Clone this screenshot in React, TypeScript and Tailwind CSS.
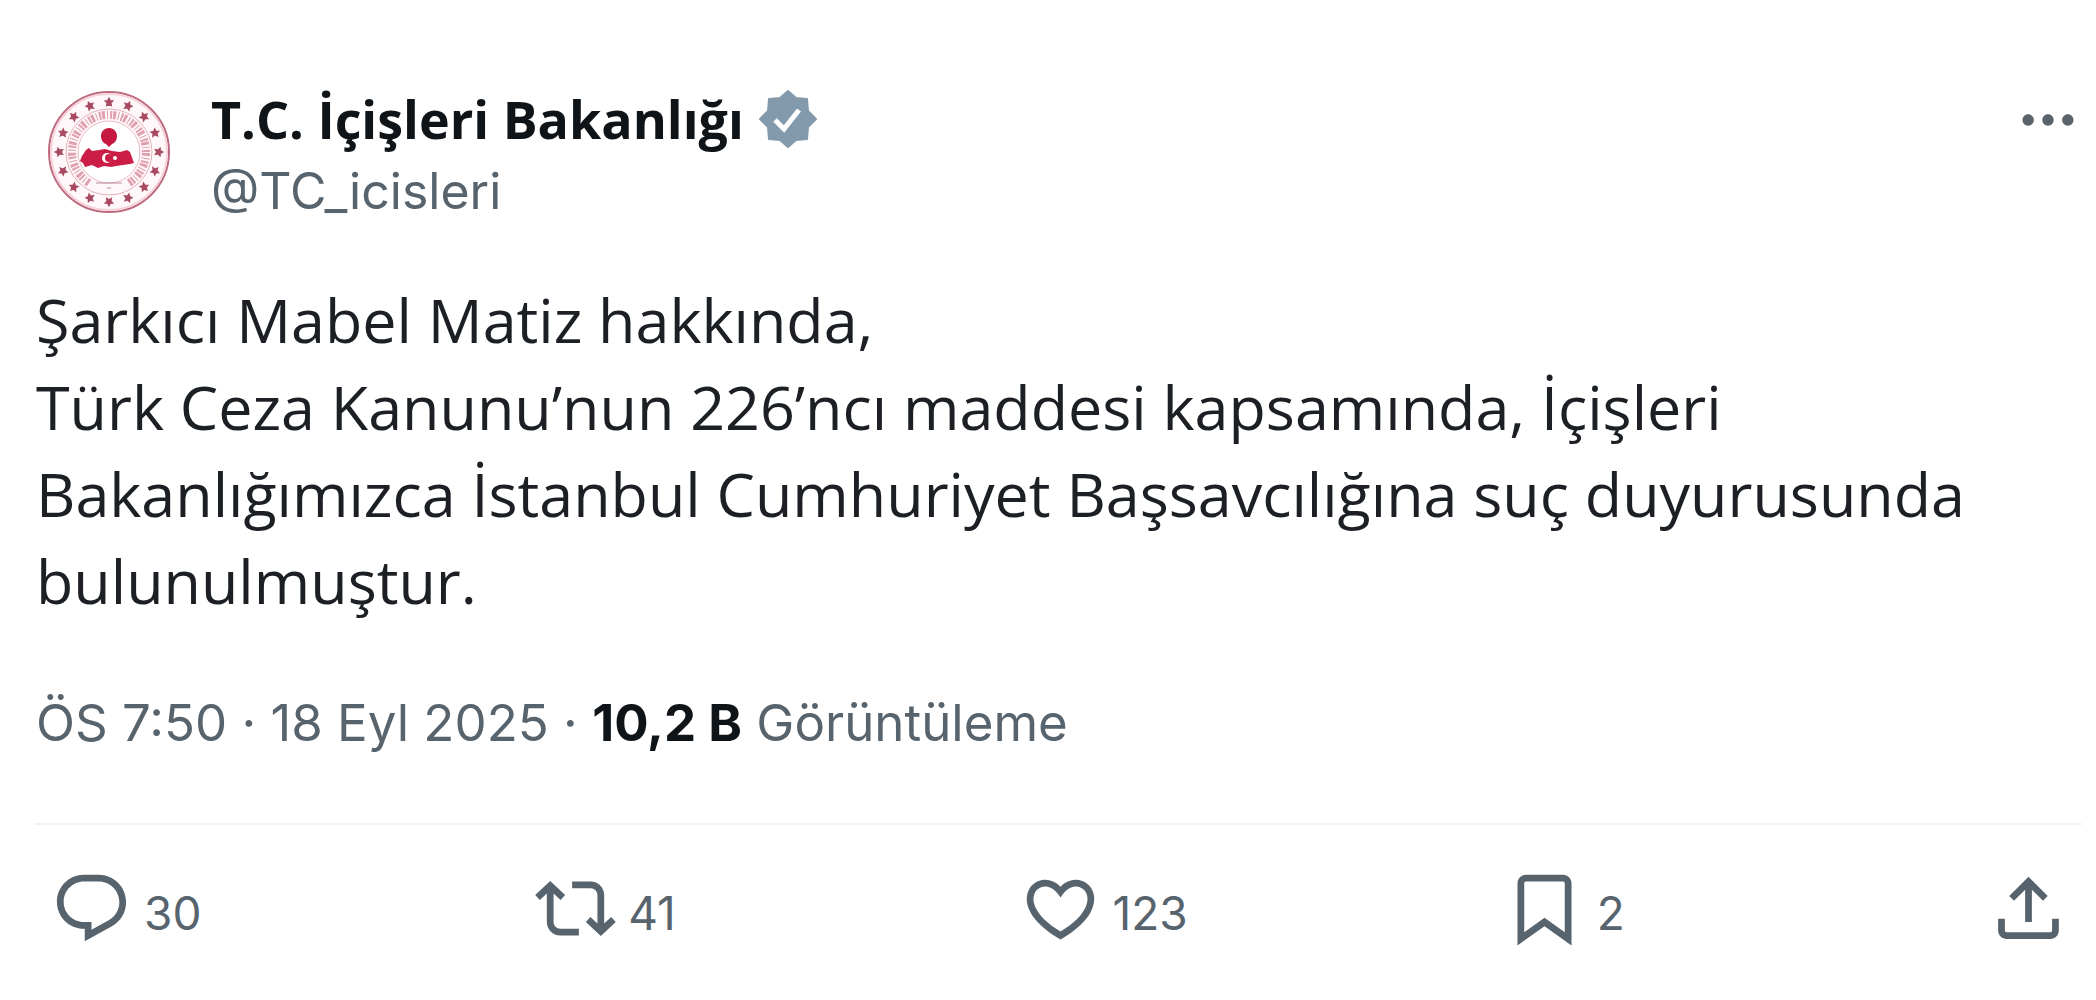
import type { ReactNode } from "react";

const paths = {
  reply:
    "M1.751 10c0-4.42 3.584-8 8.005-8h4.366c4.49 0 8.129 3.64 8.129 8.13 0 2.96-1.607 5.68-4.196 7.11l-8.054 4.46v-3.69h-.067c-4.49.1-8.183-3.51-8.183-8.01zm8.005-6c-3.317 0-6.005 2.69-6.005 6 0 3.37 2.77 6.08 6.138 6.01l.351-.01h1.761v2.3l5.087-2.81c1.951-1.08 3.163-3.13 3.163-5.36 0-3.39-2.744-6.13-6.129-6.13H9.756z",
  repost:
    "M4.5 3.88l4.432 4.14-1.364 1.46L5.5 7.55V16c0 1.1.896 2 2 2H13v2H7.5c-2.209 0-4-1.79-4-4V7.55L1.432 9.48.068 8.02 4.5 3.88zM16.5 6H11V4h5.5c2.209 0 4 1.79 4 4v8.45l2.068-1.93 1.364 1.46-4.432 4.14-4.432-4.14 1.364-1.46 2.068 1.93V8c0-1.1-.896-2-2-2z",
  like: "M16.697 5.5c-1.222-.06-2.679.51-3.89 2.16l-.805 1.09-.806-1.09C9.984 6.01 8.526 5.44 7.304 5.5c-1.243.07-2.349.78-2.91 1.91-.552 1.12-.633 2.78.479 4.82 1.074 1.97 3.257 4.27 7.129 6.61 3.87-2.34 6.052-4.64 7.126-6.61 1.111-2.04 1.03-3.7.477-4.82-.561-1.13-1.666-1.84-2.908-1.91zm4.187 7.69c-1.351 2.48-4.001 5.12-8.379 7.67l-.503.3-.504-.3c-4.379-2.55-7.029-5.19-8.382-7.67-1.36-2.5-1.41-4.86-.514-6.67.887-1.79 2.647-2.91 4.601-3.01 1.651-.09 3.368.56 4.798 2.01 1.429-1.45 3.146-2.1 4.796-2.01 1.954.1 3.714 1.22 4.601 3.01.896 1.81.846 4.17-.514 6.67z",
  bookmark:
    "M4 4.5C4 3.12 5.119 2 6.5 2h11C18.881 2 20 3.12 20 4.5v18.44l-8-5.71-8 5.71V4.5zM6.5 4c-.276 0-.5.22-.5.5v14.56l6-4.29 6 4.29V4.5c0-.28-.224-.5-.5-.5h-11z",
  share:
    "M12 2.59l5.7 5.7-1.41 1.42L13 6.41V16h-2V6.41l-3.3 3.3-1.41-1.42L12 2.59zM21 15l-.02 3.51c0 1.38-1.12 2.49-2.5 2.49H5.5C4.11 21 3 19.88 3 18.5V15h2v3.5c0 .28.22.5.5.5h12.98c.28 0 .5-.22.5-.5L19 15h2z",
  more: "M3 12c0-1.1.9-2 2-2s2 .9 2 2-.9 2-2 2-2-.9-2-2zm9 2c1.1 0 2-.9 2-2s-.9-2-2-2-2 .9-2 2 .9 2 2 2zm7 0c1.1 0 2-.9 2-2s-.9-2-2-2-2 .9-2 2 .9 2 2 2z",
};

const actions = [
  { label: "Yanıtla", icon: paths.reply, count: "30" },
  { label: "Yeniden gönder", icon: paths.repost, count: "41" },
  { label: "Beğen", icon: paths.like, count: "123" },
  { label: "Yer işareti", icon: paths.bookmark, count: "2" },
];

function Icon({ d, className }: { d: string; className: string }) {
  return (
    <svg viewBox="0 0 24 24" fill="currentColor" className={className} aria-hidden="true">
      <path d={d} />
    </svg>
  );
}

function Seal() {
  const stars = Array.from({ length: 16 }, (_, i) => (i * 360) / 16);

  return (
    <svg viewBox="0 0 124 124" className="size-31 shrink-0" role="img" aria-label="T.C. İçişleri Bakanlığı">
      <circle cx="62" cy="62" r="60" fill="#fff8fa" stroke="#bd6a80" strokeWidth="2" />
      <circle cx="62" cy="62" r="58" fill="none" stroke="#f6d3db" strokeWidth="2" />
      {stars.map((angle) => (
        <path
          key={angle}
          transform={`rotate(${angle} 62 62)`}
          d="M62 9l1 2 2 .2-1.500 1.500.4 2.200-1.900-1.100-1.900 1.100.4-2.200-1.500-1.500 2-.2z"
          fill="#a94a63"
          stroke="#a94a63"
          strokeWidth="2"
        />
      ))}
      <circle cx="62" cy="62" r="43" fill="none" stroke="#e3b0bb" />
      {/* lettering band, open at the bottom */}
      <path
        d="M42 93A37 37 0 1 1 82 93"
        fill="none"
        stroke="#dfa0af"
        strokeWidth="8"
        strokeDasharray="3 2 1 2 2 1"
      />
      <circle cx="62" cy="62" r="31" fill="#fff" stroke="#ecb9c4" />
      <path d="M49 93h26M60 98h4" stroke="#b98a96" />
      <path d="M62 38c5 0 8 4 8 8s-2 7-5 8l-3 3-3-3c-3-1-5-4-5-8s3-8 8-8z" fill="#c5193f" />
      <path
        d="M39 60l3-2 3 3 7-1 6-1 7 2 8 1 7-2 3 2 4 11-4 1-7 1-7 1-5 1-7-1-6 2-6-3-7 2-2-4-3-2 2-5z"
        fill="#cb1d45"
      />
      <circle cx="60" cy="68" r="5" fill="#fff" />
      <circle cx="62" cy="68" r="4" fill="#cb1d45" />
      <circle cx="68" cy="68" r="2" fill="#fff" />
    </svg>
  );
}

function VerifiedBadge() {
  return (
    <svg viewBox="0 0 60 60" className="size-15 shrink-0" role="img" aria-label="Onaylanmış hesap">
      <path
        d="M30 2L38 9 49 10 50 22 58 30 50 38 49 50 38 51 30 58 22 51 11 50 10 38 2 30 10 22 11 10 22 9z"
        fill="#829aab"
        stroke="#829aab"
        strokeWidth="2"
        strokeLinejoin="round"
      />
      <path d="M17 31l9 9L41 21" fill="none" stroke="#fff" strokeWidth="5" />
    </svg>
  );
}

function ActionButton({ label, icon, children }: { label: string; icon: string; children?: ReactNode }) {
  return (
    <button type="button" aria-label={label} className="flex items-center gap-3">
      <Icon d={icon} className="size-[81px] shrink-0" />
      {children}
    </button>
  );
}

export default function App() {
  return (
    <article className="min-h-screen bg-white pt-[84px] pr-[14px] pl-[35px] font-['Inter',sans-serif] text-[#57636d]">
      <header className="flex items-start pl-3">
        <div className="pt-[6px]">
          <Seal />
        </div>
        <div className="ml-10 flex-1">
          <div className="flex h-[70px] items-center gap-[14px]">
            <h1 className="font-['Open_Sans',sans-serif] text-[52px] font-bold text-[#0f1419]">
              T.C. İçişleri Bakanlığı
            </h1>
            <VerifiedBadge />
          </div>
          <a href="#profile" className="block text-[50px] leading-[74px]">
            @TC_icisleri
          </a>
        </div>
        <button type="button" aria-label="Daha fazla" className="pt-[2px]">
          <Icon d={paths.more} className="size-[68px]" />
        </button>
      </header>

      <p className="mt-12 pl-px font-['Open_Sans',sans-serif] text-[61px] leading-[87px] text-[#1c2025]">
        Şarkıcı Mabel Matiz hakkında,
        <br />
        Türk Ceza Kanunu’nun 226’ncı maddesi kapsamında, İçişleri
        <br />
        Bakanlığımızca İstanbul Cumhuriyet Başsavcılığına suç duyurusunda
        <br />
        bulunulmuştur.
      </p>

      <p className="mt-16 pl-px text-[51px] leading-[70px]">
        <time dateTime="2025-09-18T19:50">ÖS 7:50 · 18 Eyl 2025</time> ·{" "}
        <strong className="font-bold text-[#0f1419]">10,2 B</strong> Görüntüleme
      </p>

      <footer className="mt-[65px] flex border-t-2 border-[#eff3f4] pt-[43px] pr-[13px] pl-4">
        {actions.map((action) => (
          <div key={action.label} className="flex-1">
            <ActionButton label={action.label} icon={action.icon}>
              <span className="pt-2 text-[46px] leading-[52px]">{action.count}</span>
            </ActionButton>
          </div>
        ))}
        <ActionButton label="Paylaş" icon={paths.share} />
      </footer>
    </article>
  );
}
